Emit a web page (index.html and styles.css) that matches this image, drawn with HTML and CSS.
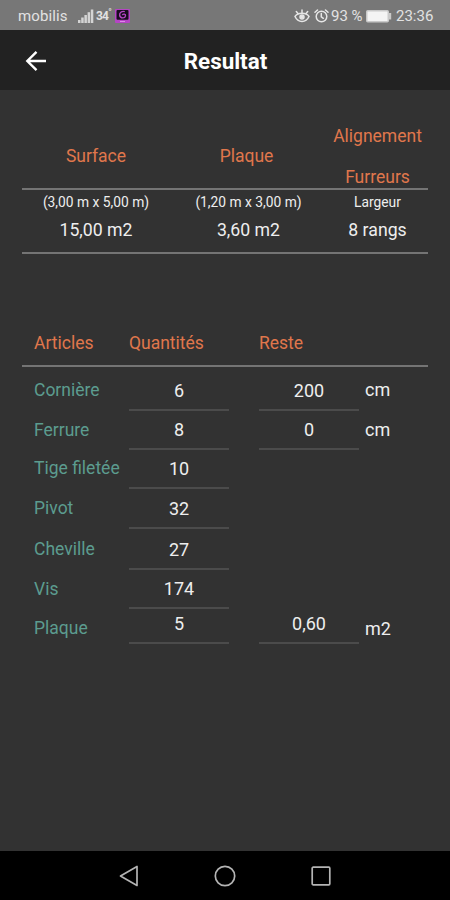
FILE: index.html
```html
<!DOCTYPE html>
<html lang="fr">
<head>
    <meta charset="UTF-8">
    <title>Resultat</title>
    <link rel="stylesheet" href="styles.css">
</head>
<body>
    <div class="status-bar">
        <span class="carrier">mobilis</span>
        <svg class="signal" width="16" height="14" viewBox="0 0 16 14" fill="#d4d4d4">
            <rect x="0" y="11" width="2.5" height="3"/>
            <rect x="3.2" y="8.5" width="2.5" height="5.5"/>
            <rect x="6.4" y="6" width="2.5" height="8"/>
            <rect x="9.6" y="3.2" width="2.5" height="10.8"/>
            <rect x="12.8" y="0.5" width="2.5" height="13.5"/>
        </svg>
        <span class="temp">34<sup>°</sup></span>
        <svg class="app-icon" width="15" height="14" viewBox="0 0 15 14">
            <rect width="15" height="14" rx="1" fill="#b545c4"/>
            <rect x="1.5" y="1" width="12" height="9.8" rx="1" fill="#170b1d"/>
            <path d="M9.8 2.6C6.5 1.8 4.2 4 4.7 6.5c.6 3 5.2 3.2 5.8.3C10.7 5 8.5 4.5 7.3 6" fill="none" stroke="#b545c4" stroke-width="1.4"/>
            <path d="M5 12.5h5" stroke="#dd8ce8"/>
        </svg>
        <span class="spacer"></span>
        <svg class="eye" width="16" height="14" viewBox="0 0 16 14" fill="none" stroke="#e6e6e6" stroke-width="1.5" stroke-linecap="round">
            <path d="M1 7.5C4 3.3 12 3.3 15 7.5C12 14 4 14 1 7.5Z"/>
            <path d="M2.3 2.5l1.7 2M8 1v2.5M13.7 2.5l-1.7 2"/>
            <circle cx="8" cy="8" r="2" fill="#e6e6e6"/>
        </svg>
        <svg class="alarm" width="15" height="14" viewBox="0 0 15 14" fill="none" stroke="#e6e6e6" stroke-width="1.5" stroke-linecap="round">
            <circle cx="7.5" cy="7.5" r="5.3"/>
            <path d="M1 3.3L3.5 1M14 3.3L11.5 1M7.3 4.5v3.3l2 1.5"/>
        </svg>
        <span class="percent">93 %</span>
        <svg class="battery" width="26" height="13" viewBox="0 0 26 13">
            <rect x="0.75" y="0.75" width="21.5" height="11" rx="1" fill="#f4f4f4" stroke="#c9c9c9" stroke-width="1.5"/>
            <rect x="23" y="3" width="2.2" height="6.5" fill="#c9c9c9"/>
        </svg>
        <span class="clock">23:36</span>
    </div>

    <div class="app-bar">
        <svg class="back" width="22" height="22" viewBox="0 0 22 22" fill="none" stroke="#fff" stroke-width="2.4">
            <path d="M21 11H2.5M11.5 1.8L2.3 11l9.2 9.2"/>
        </svg>
        <h1>Resultat</h1>
    </div>

    <main>
        <div class="summary-head">
            <div>Surface</div>
            <div>Plaque</div>
            <div>Alignement<br>Furreurs</div>
        </div>
        <div class="summary-body">
            <div><small>(3,00 m x 5,00 m)</small><b>15,00 m2</b></div>
            <div><small>(1,20 m x 3,00 m)</small><b>3,60 m2</b></div>
            <div><small>Largeur</small><b>8 rangs</b></div>
        </div>

        <div class="list-head">
            <span>Articles</span>
            <span>Quantités</span>
            <span>Reste</span>
        </div>
        <div class="list">
            <div class="row row-first"><span class="label">Cornière</span><span class="value">6</span><span class="value">200</span><span class="unit">cm</span></div>
            <div class="row row-even"><span class="label">Ferrure</span><span class="value">8</span><span class="value">0</span><span class="unit">cm</span></div>
            <div class="row"><span class="label">Tige filetée</span><span class="value">10</span></div>
            <div class="row row-pivot"><span class="label">Pivot</span><span class="value">32</span></div>
            <div class="row row-tall"><span class="label">Cheville</span><span class="value">27</span></div>
            <div class="row row-even"><span class="label">Vis</span><span class="value">174</span></div>
            <div class="row row-last"><span class="label">Plaque</span><span class="value">5</span><span class="value">0,60</span><span class="unit">m2</span></div>
        </div>
    </main>

    <div class="nav-bar">
        <svg width="20" height="22" viewBox="0 0 20 22" fill="none" stroke="#b4b4b4" stroke-width="1.7" stroke-linejoin="round"><path d="M18 1.5v19L1.5 11Z"/></svg>
        <svg width="22" height="22" viewBox="0 0 22 22" fill="none" stroke="#b4b4b4" stroke-width="1.7"><circle cx="11" cy="11" r="9.7"/></svg>
        <svg width="20" height="20" viewBox="0 0 20 20" fill="none" stroke="#b4b4b4" stroke-width="1.7"><rect x="1.2" y="1.2" width="17.6" height="17.6" rx="1"/></svg>
    </div>
</body>
</html>
```
FILE: styles.css
```css
* {
    box-sizing: border-box;
}
body {
    margin: 0;
    height: 900px;
    display: flex;
    flex-direction: column;
    overflow: hidden;
    background-color: #323232;
    color: #eee;
    font-family: Roboto, sans-serif;
    font-size: 18px;
}
.status-bar {
    height: 30px;
    padding: 2px 17px 0 18px;
    display: flex;
    align-items: center;
    background-color: #777;
    color: #e2e2e2;
    font-size: 15px;
}
.carrier {
    width: 60px;
    letter-spacing: 0.1px;
}
.temp {
    width: 19px;
    font-size: 12px;
    font-weight: bold;
    letter-spacing: -0.8px;
    white-space: nowrap;
}
.signal {
    margin-right: 2px;
}
.temp sup {
    font-size: 9px;
    line-height: 0;
}
.spacer {
    flex: 1;
}
.alarm {
    margin: 0 2px 0 4px;
}
.percent {
    width: 35px;
    white-space: nowrap;
}
.clock {
    width: 37px;
    margin-left: 4px;
}
.app-bar {
    height: 60px;
    padding: 2px 25px 0;
    display: grid;
    grid-template-columns: 22px 1fr 22px;
    align-items: center;
    background-color: #222;
}
.app-bar h1 {
    margin: 0;
    padding-left: 1px;
    font-size: 22.4px;
    color: #fff;
    text-align: center;
}
main {
    flex: 1;
    padding: 25px 22px 0;
}
.summary-head, .summary-body {
    display: grid;
    grid-template-columns: 148px 157px 101px;
    text-align: center;
}
.summary-head {
    height: 75px;
    align-items: start;
    color: #e0774c;
    line-height: 41px;
    border-bottom: 2px solid #747474;
}
.summary-head div {
    padding-top: 21px;
}
.summary-head div:nth-child(2) {
    padding-right: 4px;
}
.summary-head div:last-child {
    padding-top: 1px;
}
.summary-head, .list-head {
    font-size: 17.5px;
}
.summary-body {
    height: 64px;
    padding-top: 3px;
    border-bottom: 2px solid #747474;
}
.summary-body small, .summary-body b {
    display: block;
    font-weight: normal;
}
.summary-body small {
    font-size: 13.8px;
    line-height: 18px;
}
.summary-body b {
    font-size: 17.7px;
    line-height: 38px;
}
.list-head, .row {
    display: grid;
    grid-template-columns: 95px 100px 30px 100px 6px auto;
    padding-left: 12px;
}
.list-head {
    height: 49px;
    margin-top: 64px;
    padding-top: 15px;
    color: #e0774c;
    line-height: 21px;
    border-bottom: 2px solid #747474;
}
.list-head span:nth-child(3) {
    grid-column: 4;
}
.row {
    height: 39px;
    line-height: 22px;
    align-items: end;
}
.row-first {
    height: 44px;
}
.row-pivot {
    height: 40px;
}
.row-tall {
    height: 41px;
}
.row-last {
    height: 35px;
}
.label {
    font-size: 17.5px;
    color: #5c9c8f;
    padding-bottom: 10px;
    white-space: nowrap;
}
.value {
    padding-bottom: 7px;
    border-bottom: 2px solid #4b4b4b;
    text-align: center;
}
.value + .value {
    grid-column: 4;
}
.unit {
    grid-column: 6;
    padding-bottom: 10px;
}
.row-even .label, .row-even .unit {
    padding-bottom: 9px;
}
.row-last .label {
    padding-bottom: 5px;
}
.row-last .unit {
    padding-bottom: 4px;
}
.nav-bar {
    height: 49px;
    padding: 0 119px;
    display: flex;
    justify-content: space-between;
    align-items: center;
    background-color: #000;
}
```
